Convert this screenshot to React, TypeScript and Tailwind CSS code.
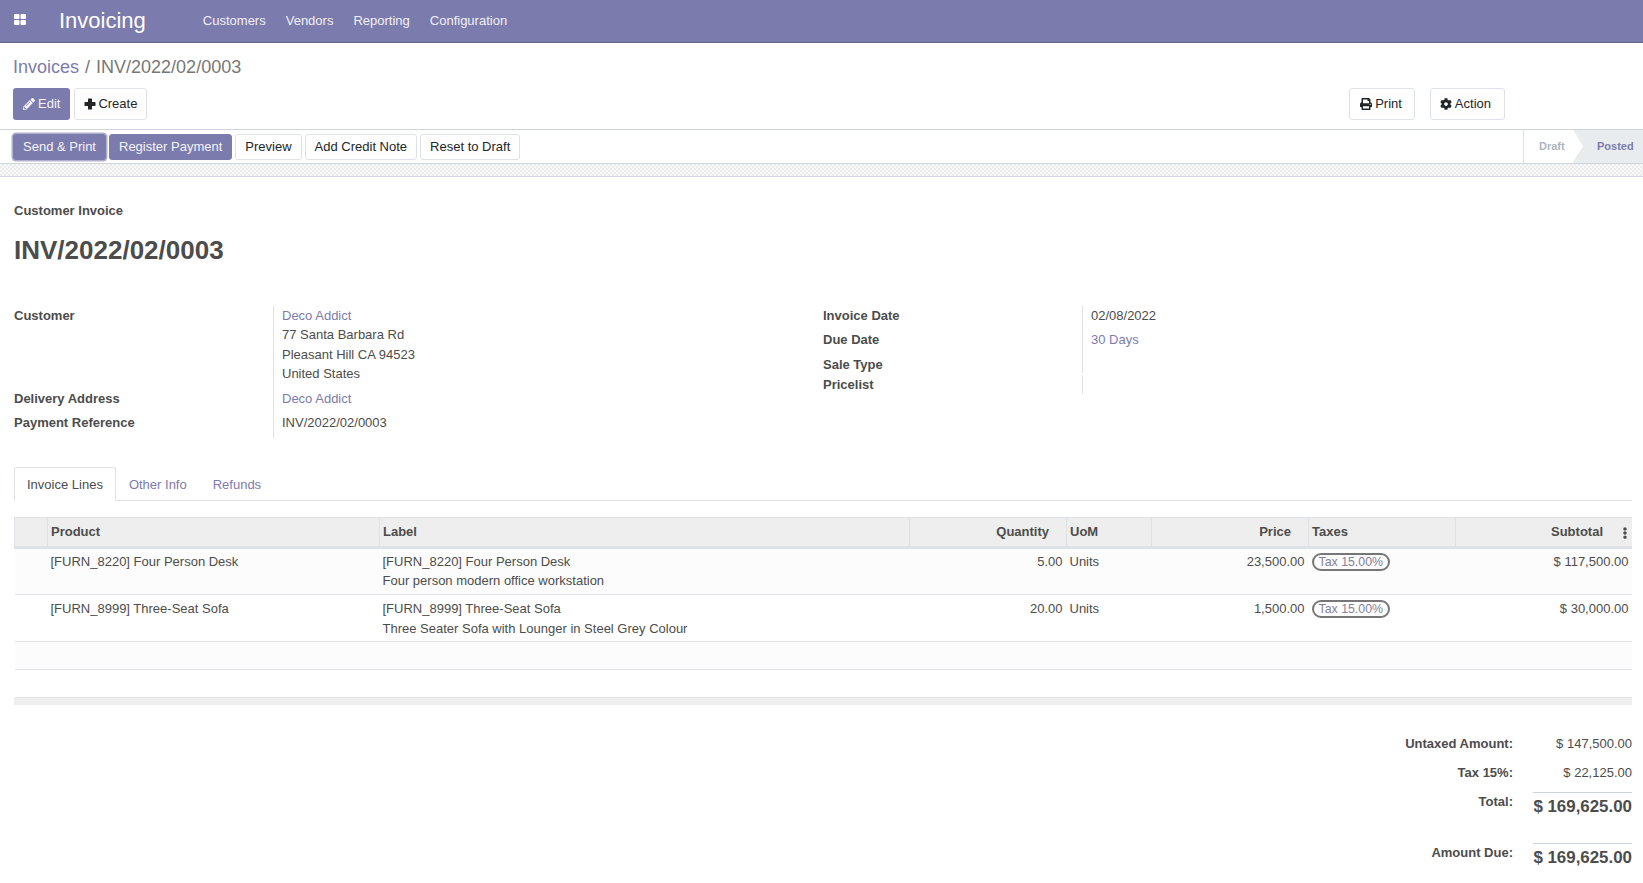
import { FaCog, FaEllipsisV, FaPencilAlt, FaPrint } from "react-icons/fa";

const rows = [
  {
    product: "[FURN_8220] Four Person Desk",
    desc: "Four person modern office workstation",
    qty: "5.00",
    price: "23,500.00",
    subtotal: "$ 117,500.00",
    pad: "pt-[3px]",
    badgePad: "pt-[3px]",
  },
  {
    product: "[FURN_8999] Three-Seat Sofa",
    desc: "Three Seater Sofa with Lounger in Steel Grey Colour",
    qty: "20.00",
    price: "1,500.00",
    subtotal: "$ 30,000.00",
    pad: "pt-[4.6px]",
    badgePad: "pt-[4px]",
  },
];

const primaryBtn = "h-[26px] px-[9px] rounded-[3px] border border-[#7c7bad] bg-[#7c7bad] text-[#f3f3f8]";
const plainBtn = "h-[26px] px-[9px] rounded-[3px] border border-[#dee2e6] bg-white text-[#212529]";
const panelBtn = "h-[32px] rounded-[3px] border border-[#dee2e6] bg-white text-[#212529] flex items-center";

export default function App() {
  return (
    <div className="min-h-[883px] bg-white font-['Liberation_Sans',Arial,sans-serif] text-[13px] leading-[19.5px] text-[#4c4c4c] overflow-hidden">
      {/* top bar */}
      <nav className="h-[43px] bg-[#7c7bad] border-b border-[#65648f] flex items-center text-white">
        <svg className="ml-[14px] mb-[3px]" width="12" height="11" viewBox="0 0 12 11" fill="#fff">
          <rect x="0" y="0" width="5.5" height="5" rx="1" />
          <rect x="6.5" y="0" width="5.5" height="5" rx="1" />
          <rect x="0" y="6" width="5.5" height="5" rx="1" />
          <rect x="6.5" y="6" width="5.5" height="5" rx="1" />
        </svg>
        <span className="ml-[33px] text-[22px] leading-[30px]">Invoicing</span>
        <div className="ml-[57px] flex gap-[20px] text-[#f0f0f6]">
          <span>Customers</span>
          <span>Vendors</span>
          <span>Reporting</span>
          <span>Configuration</span>
        </div>
      </nav>

      {/* control panel */}
      <div className="pl-[13px] pt-[11px]">
        <div className="text-[18px] leading-[27px] text-[#777777]">
          <span className="text-[#7c7bad]">Invoices</span>
          <span className="mx-[6px]">/</span>
          <span>INV/2022/02/0003</span>
        </div>
        <div className="mt-[7px] flex justify-between pr-[138px]">
          <div className="flex gap-[4px]">
            <button className="h-[32px] px-[10px] rounded-[3px] bg-[#7c7bad] text-[#f3f3f8] flex items-center gap-[3px]">
              <FaPencilAlt className="text-[12px]" />
              Edit
            </button>
            <button className={panelBtn + " pl-[9px] pr-[9px] gap-[2px]"}>
              <svg width="12" height="12" viewBox="0 0 12 12" fill="#212529">
                <rect x="4" y="0.5" width="4" height="11" rx="0.6" />
                <rect x="0.5" y="4" width="11" height="4" rx="0.6" />
              </svg>
              Create
            </button>
          </div>
          <div className="flex gap-[15px]">
            <button className={panelBtn + " pl-[10px] pr-[12px] gap-[3px]"}>
              <FaPrint className="text-[12px]" />
              Print
            </button>
            <button className={panelBtn + " pl-[9px] pr-[13px] gap-[3px]"}>
              <FaCog className="text-[12px]" />
              Action
            </button>
          </div>
        </div>
      </div>

      {/* status bar */}
      <div className="mt-[9px] h-[35px] border-y border-[#ced4da] flex justify-between items-stretch">
        <div className="pl-[13px] flex items-center gap-[3px]">
          <button className={primaryBtn + " shadow-[0_0_0_1.5px_#b0afcd]"}>Send &amp; Print</button>
          <button className={primaryBtn}>Register Payment</button>
          <button className={plainBtn}>Preview</button>
          <button className={plainBtn}>Add Credit Note</button>
          <button className={plainBtn}>Reset to Draft</button>
        </div>
        <div className="flex text-[11px] font-bold">
          <div className="w-[50px] border-l border-[#dee2e6] pl-[15px] flex items-center text-[#adb5bd]">Draft</div>
          <div className="relative w-[70px] bg-[#e9ecef] pl-[24px] flex items-center text-[#7c7bad]">
            <span className="absolute left-0 top-0 border-y-[16.5px] border-l-[10px] border-y-transparent border-l-white" />
            Posted
          </div>
        </div>
      </div>
      <div className="h-[13px] border-b border-[#d5d5e2] bg-[repeating-conic-gradient(#ebebeb_0_25%,#f8f8f8_0_50%)] bg-[length:4px_4px]" />

      {/* form */}
      <div className="pl-[14px] pr-[11px] pt-[24px]">
        <div className="font-bold">Customer Invoice</div>
        <h1 className="mt-[14px] text-[26px] leading-[31px] font-bold">INV/2022/02/0003</h1>

        <div className="mt-[40px] flex">
          <div className="w-[809px] grid grid-cols-[259px_1fr]">
            <div className="font-bold">Customer</div>
            <div className="border-l border-[#dee2e6] pl-[8px] h-[83px]">
              <div className="text-[#7c7bad]">Deco Addict</div>
              <div>77 Santa Barbara Rd</div>
              <div>Pleasant Hill CA 94523</div>
              <div>United States</div>
            </div>
            <div className="font-bold">Delivery Address</div>
            <div className="border-l border-[#dee2e6] pl-[8px] h-[24px] text-[#7c7bad]">Deco Addict</div>
            <div className="font-bold">Payment Reference</div>
            <div className="border-l border-[#dee2e6] pl-[8px] h-[25px]">INV/2022/02/0003</div>
          </div>
          <div className="flex-1 grid grid-cols-[259px_1fr] content-start">
            <div className="font-bold">Invoice Date</div>
            <div className="border-l border-[#dee2e6] pl-[8px] h-[24.5px]">02/08/2022</div>
            <div className="font-bold">Due Date</div>
            <div className="border-l border-[#dee2e6] pl-[8px] h-[25px] text-[#7c7bad]">30 Days</div>
            <div className="font-bold">Sale Type</div>
            <div className="border-l border-[#dee2e6] h-[17.5px]" />
            <div className="font-bold">Pricelist</div>
            <div className="border-l border-[#dee2e6] h-[19.5px]" />
          </div>
        </div>

        {/* tabs */}
        <div className="mt-[29px] h-[34px] border-b border-[#dee2e6] flex">
          <div className="h-[34px] px-[12px] pt-[2px] border border-b-0 border-[#dee2e6] rounded-t-[3px] bg-white flex items-center">
            Invoice Lines
          </div>
          <div className="h-[34px] px-[13px] pt-[2px] flex items-center text-[#7c7bad]">Other Info</div>
          <div className="h-[34px] px-[13px] pt-[2px] flex items-center text-[#7c7bad]">Refunds</div>
        </div>

        {/* lines */}
        <table className="mt-[16px] w-full table-fixed border-collapse">
          <colgroup>
            <col className="w-[33px]" />
            <col className="w-[332px]" />
            <col className="w-[530px]" />
            <col className="w-[157px]" />
            <col className="w-[85px]" />
            <col className="w-[157px]" />
            <col className="w-[147px]" />
            <col />
          </colgroup>
          <thead>
            <tr className="h-[30px] bg-[#eeeeee] border-t border-b-[3px] border-[#dee2e6] font-bold">
              <th className="border-l border-[#dee2e6]" />
              <th className="border-l border-[#dee2e6] pl-[3px] text-left">Product</th>
              <th className="border-l border-[#dee2e6] pl-[3px] text-left">Label</th>
              <th className="border-l border-[#dee2e6] pr-[17px] text-right">Quantity</th>
              <th className="border-l border-[#dee2e6] pl-[3px] text-left">UoM</th>
              <th className="border-l border-[#dee2e6] pr-[17px] text-right">Price</th>
              <th className="border-l border-[#dee2e6] pl-[3px] text-left">Taxes</th>
              <th className="relative border-l border-[#dee2e6] pr-[29px] text-right">
                Subtotal
                <FaEllipsisV className="absolute right-[1px] top-[9px] text-[12px]" />
              </th>
            </tr>
          </thead>
          <tbody>
            {rows.map((r, i) => (
              <tr key={r.product} className={"h-[47px] border-b border-[#dee2e6] align-top " + (i === 0 ? "bg-[#fcfcfc]" : "")}>
                <td />
                <td className={"pl-[3px] " + r.pad}>{r.product}</td>
                <td className={"pl-[3px] " + r.pad}>
                  <div>{r.product}</div>
                  <div>{r.desc}</div>
                </td>
                <td className={"pr-[4px] text-right " + r.pad}>{r.qty}</td>
                <td className={"pl-[3px] " + r.pad}>Units</td>
                <td className={"pr-[4px] text-right " + r.pad}>{r.price}</td>
                <td className={"pl-[3px] " + r.badgePad}>
                  <span className="inline-flex h-[18px] items-center rounded-full border-2 border-[#777777] px-[5px] text-[12.35px] text-[#82829a]">
                    Tax 15.00%
                  </span>
                </td>
                <td className={"pr-[3.5px] text-right " + r.pad}>{r.subtotal}</td>
              </tr>
            ))}
            <tr className="h-[28px] bg-[#fcfcfc] border-b border-[#dee2e6]">
              <td colSpan={8} />
            </tr>
            <tr className="h-[28px] border-b border-[#dee2e6]">
              <td colSpan={8} />
            </tr>
          </tbody>
        </table>
        <div className="h-[7px] bg-[#eeeeee]" />

        {/* totals */}
        <div className="mt-[29px] ml-auto w-fit grid grid-cols-[max-content_99px] gap-x-[20px]">
          <div className="h-[29.5px] text-right font-bold">Untaxed Amount:</div>
          <div className="text-right">$ 147,500.00</div>
          <div className="h-[29px] text-right font-bold">Tax 15%:</div>
          <div className="text-right">$ 22,125.00</div>
          <div className="h-[51px] text-right font-bold">Total:</div>
          <div className="h-[51px] border-t border-[#ced4da] pt-[2px] text-right text-[16.9px] leading-[24px] font-bold whitespace-nowrap">
            $ 169,625.00
          </div>
          <div className="text-right font-bold">Amount Due:</div>
          <div className="border-t border-[#ced4da] pt-[2px] text-right text-[16.9px] leading-[24px] font-bold whitespace-nowrap">
            $ 169,625.00
          </div>
        </div>
      </div>
    </div>
  );
}
